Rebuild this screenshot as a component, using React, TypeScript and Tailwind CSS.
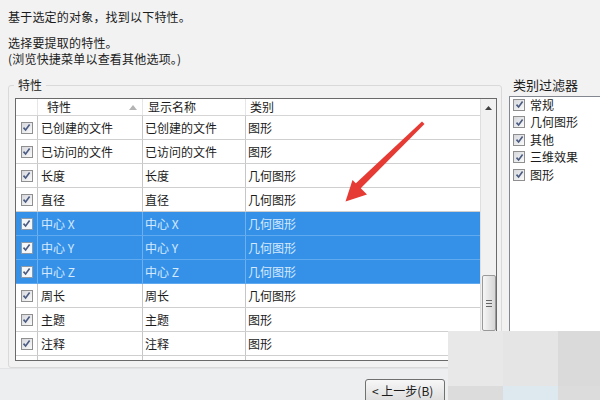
import React from "react";

type Row = { a: string; b: string; c: string; sel?: boolean };

const rows: Row[] = [
  { a: "已创建的文件", b: "已创建的文件", c: "图形" },
  { a: "已访问的文件", b: "已访问的文件", c: "图形" },
  { a: "长度", b: "长度", c: "几何图形" },
  { a: "直径", b: "直径", c: "几何图形" },
  { a: "中心 X", b: "中心 X", c: "几何图形", sel: true },
  { a: "中心 Y", b: "中心 Y", c: "几何图形", sel: true },
  { a: "中心 Z", b: "中心 Z", c: "几何图形", sel: true },
  { a: "周长", b: "周长", c: "几何图形" },
  { a: "主题", b: "主题", c: "图形" },
  { a: "注释", b: "注释", c: "图形" },
];

const filters = ["常规", "几何图形", "其他", "三维效果", "图形"];

function Check({ light }: { light?: boolean }) {
  return (
    <span
      className={
        light
          ? "w-[12px] h-[12px] shrink-0 border border-[#8e9aa8] bg-[#f4f6f8] flex items-center justify-center"
          : "w-[12px] h-[12px] shrink-0 border border-[#8f8f8f] bg-gradient-to-br from-[#d6d8dc] to-[#fafafa] flex items-center justify-center"
      }
    >
      <svg width="9" height="9" viewBox="0 0 9 9">
        <path d="M1.5 4.6 L3.6 7 L7.6 1.6" fill="none" stroke="#4a5a80" strokeWidth="1.6" />
      </svg>
    </span>
  );
}

export default function App() {
  return (
    <div className="w-[600px] h-[400px] overflow-hidden relative bg-[#f2f2f2] text-[#1b1b1b] font-['Noto_Sans_CJK_SC','Noto_Sans',sans-serif] flex flex-col">
      <div className="h-[376px] flex flex-col">
        <div className="pl-[8px] pt-[9px] text-[12px] leading-[16px] tracking-[0.2px]">
          <div>基于选定的对象，找到以下特性。</div>
          <div className="mt-[10px]">选择要提取的特性。</div>
          <div>(浏览快捷菜单以查看其他选项。)</div>
        </div>
        <div className="flex mt-[10px]">
          <fieldset className="ml-[8px] w-[494px] shrink-0 border border-[#d9d9d9] rounded-[3px] pb-[1px]">
            <legend className="ml-[5px] px-[4px] text-[12px] leading-[16px]">特性</legend>
            <div className="ml-[6px] mt-[5px] w-[482px] h-[263px] border border-[#6a6a6a] flex bg-white">
              <div className="w-[464px] flex flex-col overflow-hidden">
                <div className="h-[17px] flex border-b border-[#d5d5d5] text-[12px] leading-[16px] shrink-0">
                  <div className="w-[22px] border-r border-[#e6e6e6]" />
                  <div className="w-[105px] border-r border-[#e6e6e6] pl-[9px] pr-[5px] flex items-center justify-between">
                    <span>特性</span>
                    <svg width="8" height="5" viewBox="0 0 8 5">
                      <path d="M0 5 L4 0 L8 5 Z" fill="#b4b4b4" />
                    </svg>
                  </div>
                  <div className="w-[103px] border-r border-[#e6e6e6] pl-[5px]">显示名称</div>
                  <div className="flex-1 pl-[4px]">类别</div>
                </div>
                {rows.map((r, i) => (
                  <div
                    key={i}
                    className={
                      r.sel
                        ? "h-[24px] shrink-0 flex border-b border-[#62aaf0] bg-[#3591e8] text-[#d6e9ff] text-[12px] leading-[23px]"
                        : "h-[24px] shrink-0 flex border-b border-[#cfcfcf] text-[12px] leading-[23px]"
                    }
                  >
                    <div className={r.sel ? "w-[22px] border-r border-[#6ab0f2] flex items-center justify-center" : "w-[22px] border-r border-[#c6c6c6] flex items-center justify-center"}>
                      <Check light={r.sel} />
                    </div>
                    <div className={r.sel ? "w-[105px] border-r border-[#6ab0f2] pl-[3px]" : "w-[105px] border-r border-[#c6c6c6] pl-[3px]"}>{r.a}</div>
                    <div className={r.sel ? "w-[103px] border-r border-[#6ab0f2] pl-[2px]" : "w-[103px] border-r border-[#c6c6c6] pl-[2px]"}>{r.b}</div>
                    <div className="flex-1 pl-[2px]">{r.c}</div>
                  </div>
                ))}
                <div className="flex-1 flex">
                  <div className="w-[22px] border-r border-[#c6c6c6]" />
                  <div className="w-[105px] border-r border-[#c6c6c6]" />
                  <div className="w-[103px] border-r border-[#c6c6c6]" />
                </div>
              </div>
              <div className="w-[16px] bg-[#f1f1f1] border-l border-[#dedede] flex flex-col">
                <div className="h-[17px] flex items-center justify-center">
                  <svg width="7" height="4" viewBox="0 0 7 4">
                    <path d="M0 4 L3.5 0 L7 4 Z" fill="#404040" />
                  </svg>
                </div>
                <div className="mt-[159px] h-[56px] mx-auto w-[14px] border border-[#9a9a9a] rounded-[2px] bg-gradient-to-r from-[#f6f6f6] to-[#d6d6d6] flex flex-col items-center justify-center gap-[2px]">
                  <span className="w-[6px] h-[1px] bg-[#666]" />
                  <span className="w-[6px] h-[1px] bg-[#666]" />
                  <span className="w-[6px] h-[1px] bg-[#666]" />
                </div>
              </div>
            </div>
          </fieldset>
          <div className="ml-[7px] flex flex-col">
            <div className="pl-[4px] text-[13px] leading-[16px]">类别过滤器</div>
            <div className="mt-[3px] w-[120px] h-[272px] border border-[#828790] bg-white">
              <div className="-mt-[1px] pl-[3px] flex flex-col">
                {filters.map((f) => (
                  <div key={f} className="h-[17.5px] flex items-center gap-[5px]">
                    <Check />
                    <span className="text-[12px] leading-[16px]">{f}</span>
                  </div>
                ))}
              </div>
            </div>
          </div>
        </div>
      </div>
      <div className="flex-1 border-t border-[#e1e3e5] bg-[#eceef0]">
        <div className="ml-[365px] mt-[10px] w-[80px] h-[24px] border border-[#707070] rounded-[3px] bg-gradient-to-b from-[#f7f7f7] to-[#dcdcdc] text-[12px] leading-[22px] pl-[6px]">
          &lt; 上一步(B)
        </div>
      </div>

      <svg className="absolute left-0 top-0 pointer-events-none" width="600" height="400" viewBox="0 0 600 400">
        <polygon points="422,121.5 424.5,124 358.5,190.5 353.5,185.5" fill="#e63a34" />
        <polygon points="345.5,201.5 352.5,180 367,194.5" fill="#e63a34" />
      </svg>

      <div className="absolute left-[448px] top-[331px] w-[152px] h-[69px] grid grid-cols-[55px_55px_42px] grid-rows-[55px_14px]">
        <div className="bg-[#e8e8e8]" />
        <div className="bg-[#e5e5e5]" />
        <div className="bg-[#dadada]" />
        <div className="bg-[#dcdcdc]" />
        <div className="bg-[#dde8ef]" />
        <div className="bg-[#dcdcdc]" />
      </div>
    </div>
  );
}
